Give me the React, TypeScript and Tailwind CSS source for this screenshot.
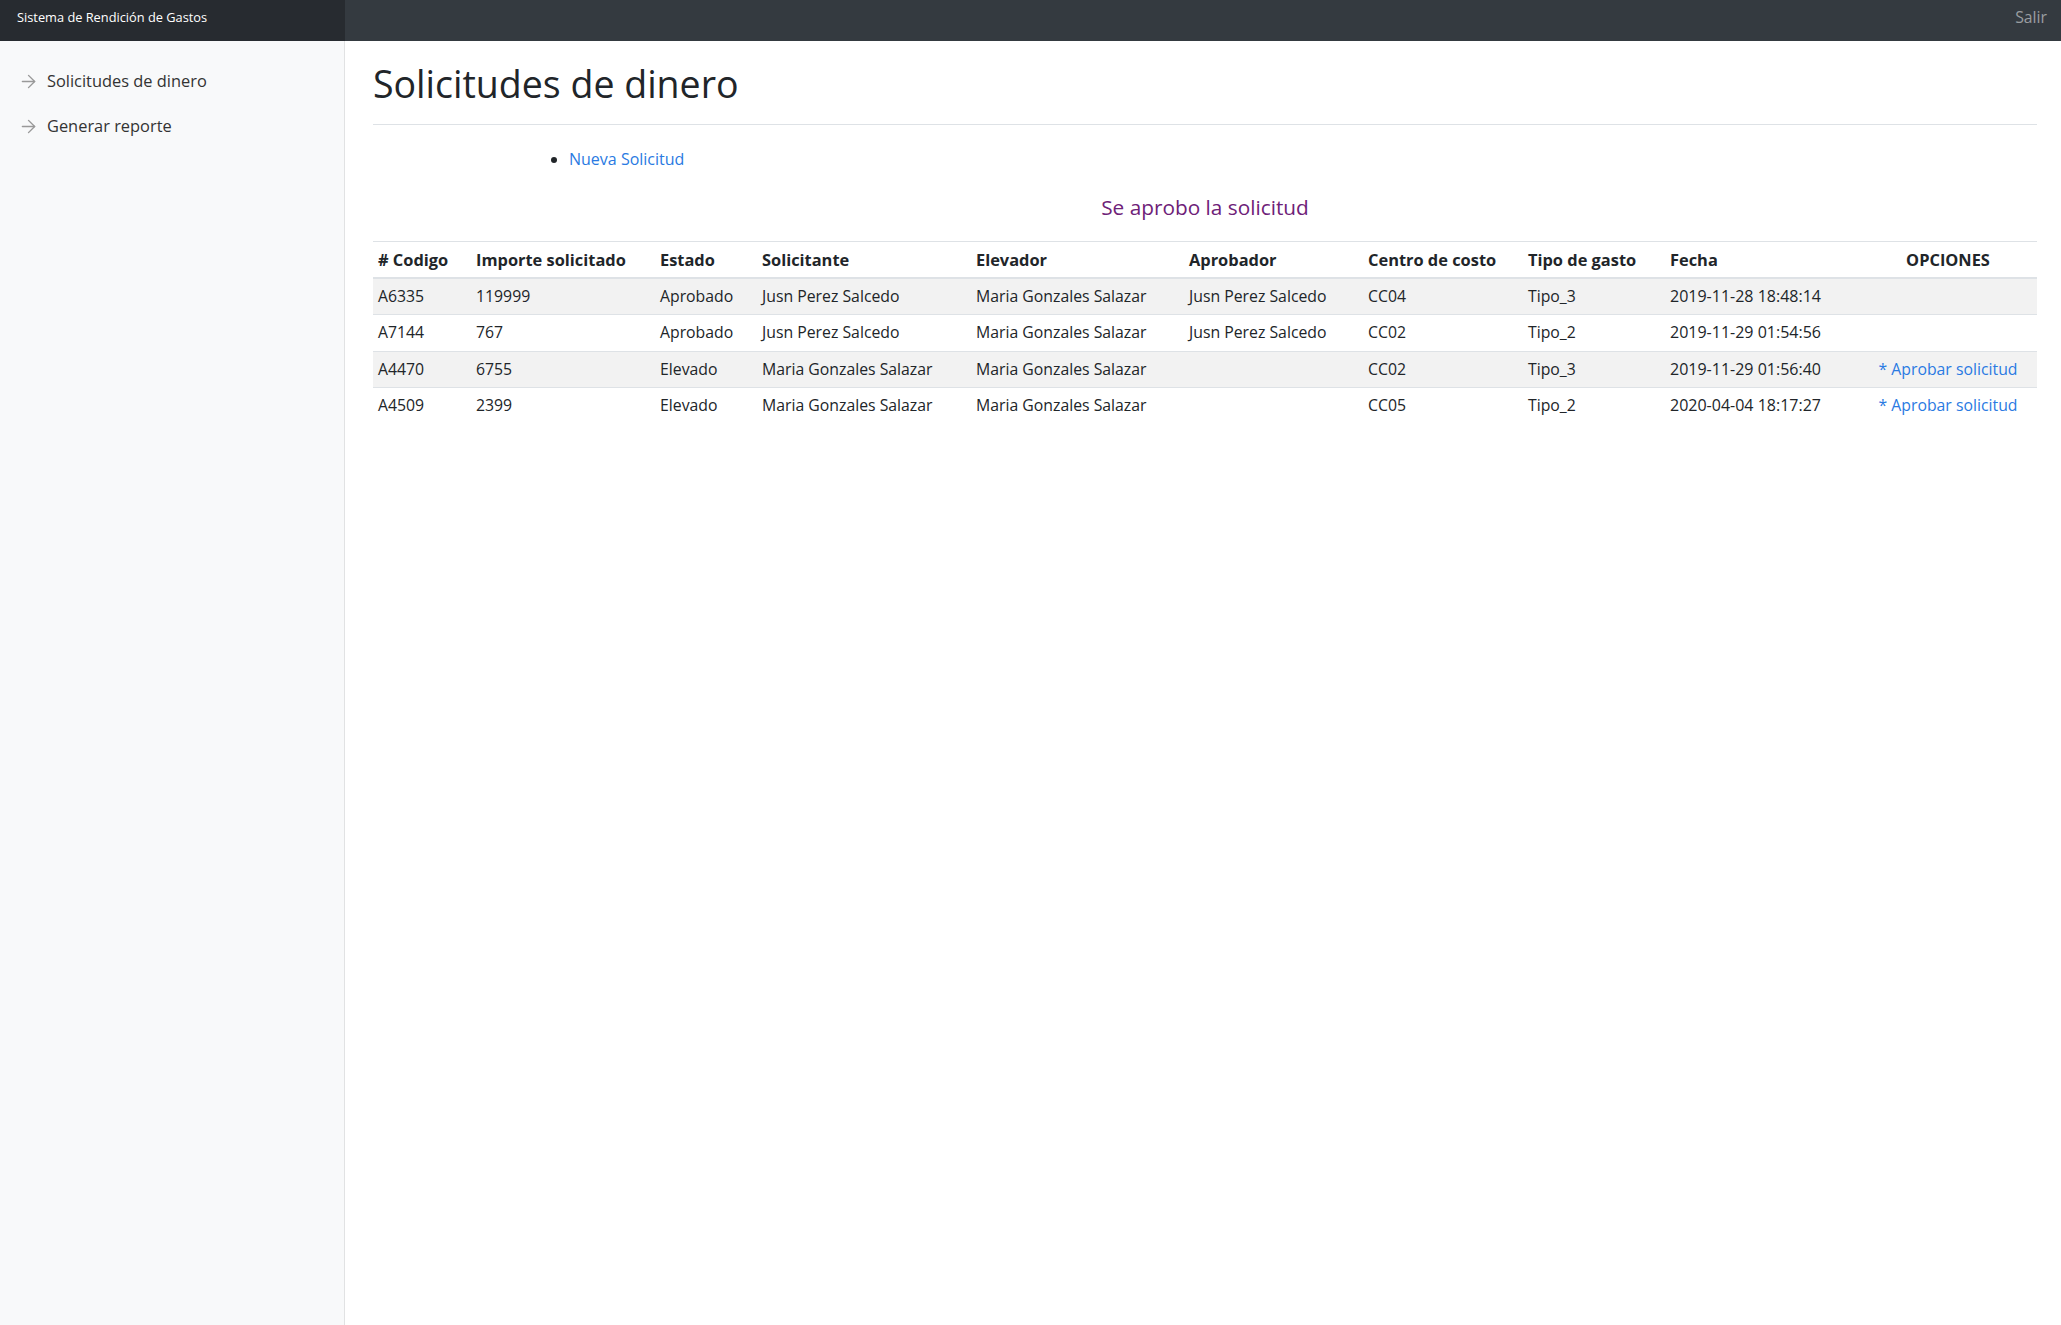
import React from "react";

const rows = [
  { c: "A6335", i: "119999", e: "Aprobado", s: "Jusn Perez Salcedo", el: "Maria Gonzales Salazar", a: "Jusn Perez Salcedo", cc: "CC04", t: "Tipo_3", f: "2019-11-28 18:48:14", o: false },
  { c: "A7144", i: "767", e: "Aprobado", s: "Jusn Perez Salcedo", el: "Maria Gonzales Salazar", a: "Jusn Perez Salcedo", cc: "CC02", t: "Tipo_2", f: "2019-11-29 01:54:56", o: false },
  { c: "A4470", i: "6755", e: "Elevado", s: "Maria Gonzales Salazar", el: "Maria Gonzales Salazar", a: "", cc: "CC02", t: "Tipo_3", f: "2019-11-29 01:56:40", o: true },
  { c: "A4509", i: "2399", e: "Elevado", s: "Maria Gonzales Salazar", el: "Maria Gonzales Salazar", a: "", cc: "CC05", t: "Tipo_2", f: "2020-04-04 18:17:27", o: true },
];

function Arrow() {
  return (
    <svg width="21" height="21" viewBox="0 0 24 24" fill="none" stroke="#999" strokeWidth="1.6" strokeLinecap="round" strokeLinejoin="round" className="shrink-0">
      <line x1="5" y1="12" x2="19" y2="12" />
      <polyline points="12 5 19 12 12 19" />
    </svg>
  );
}

const th = "px-[5px] py-[5px] border-t border-b-2 border-[#dee2e6] font-bold text-[16.4px] leading-[25px]";
const td = "px-[5px] py-[5px] border-t border-[#dee2e6] whitespace-nowrap leading-[25.4px]";

export default function App() {
  return (
    <div className="h-screen flex flex-col text-[#212529] bg-white" style={{ fontFamily: '"Open Sans", "Noto Sans", sans-serif' }}>
      <header className="h-[41px] flex bg-[#343a40] shrink-0">
        <div className="w-[345px] bg-[#272b30] flex items-center pl-[17px] pb-[5px] text-white text-[12.8px]">
          Sistema de Rendición de Gastos
        </div>
        <div className="flex-1 flex items-center justify-end pr-[14px] pb-[5px] text-[15.8px] text-[#9a9da0]">Salir</div>
      </header>
      <div className="flex-1 flex min-h-0">
        <aside className="w-[345px] shrink-0 bg-[#f8f9fa] border-r border-[#e1e2e3] pt-[18px]">
          <div className="h-[45px] flex items-center pl-[18px] gap-[8px] text-[16.4px] font-medium text-[#333]">
            <Arrow />
            <span>Solicitudes de dinero</span>
          </div>
          <div className="h-[45px] flex items-center pl-[18px] gap-[8px] text-[16.4px] font-medium text-[#333]">
            <Arrow />
            <span>Generar reporte</span>
          </div>
        </aside>
        <main className="flex-1 pl-[28px] pr-[24px]">
          <div className="pt-[19px] pb-[8px] border-b border-[#dee2e6]">
            <h1 className="text-[37.5px] leading-[48px] font-medium mb-[8px]">Solicitudes de dinero</h1>
          </div>
          <ul className="list-disc pl-[196px] mt-[22px] text-[16px] leading-[24px]">
            <li className="text-[#212529]">
              <span className="text-[#2a7ae2]">Nueva Solicitud</span>
            </li>
          </ul>
          <div className="text-center text-[20.8px] leading-[24px] text-[#6e2178] mt-[24px] mb-[22px]">Se aprobo la solicitud</div>
          <table className="w-full table-fixed border-collapse text-[15.8px]">
            <thead>
              <tr className="text-left">
                <th className={`w-[98px] ${th}`}>#&nbsp;Codigo</th>
                <th className={`w-[184px] ${th}`}>Importe solicitado</th>
                <th className={`w-[102px] ${th}`}>Estado</th>
                <th className={`w-[214px] ${th}`}>Solicitante</th>
                <th className={`w-[213px] ${th}`}>Elevador</th>
                <th className={`w-[179px] ${th}`}>Aprobador</th>
                <th className={`w-[160px] ${th}`}>Centro de costo</th>
                <th className={`w-[142px] ${th}`}>Tipo de gasto</th>
                <th className={`w-[194px] ${th}`}>Fecha</th>
                <th className={`w-[178px] ${th} text-center`}>OPCIONES</th>
              </tr>
            </thead>
            <tbody>
              {rows.map((r, idx) => (
                <tr key={r.c} className={idx % 2 === 0 ? "bg-[#f2f2f2]" : "bg-white"}>
                  <td className={td}>{r.c}</td>
                  <td className={td}>{r.i}</td>
                  <td className={td}>{r.e}</td>
                  <td className={td}>{r.s}</td>
                  <td className={td}>{r.el}</td>
                  <td className={td}>{r.a}</td>
                  <td className={td}>{r.cc}</td>
                  <td className={td}>{r.t}</td>
                  <td className={`${td} text-[16px]`}>{r.f}</td>
                  <td className={`${td} text-center text-[#2a7ae2]`}>
                    {r.o ? "* Aprobar solicitud" : ""}
                  </td>
                </tr>
              ))}
            </tbody>
          </table>
        </main>
      </div>
    </div>
  );
}
